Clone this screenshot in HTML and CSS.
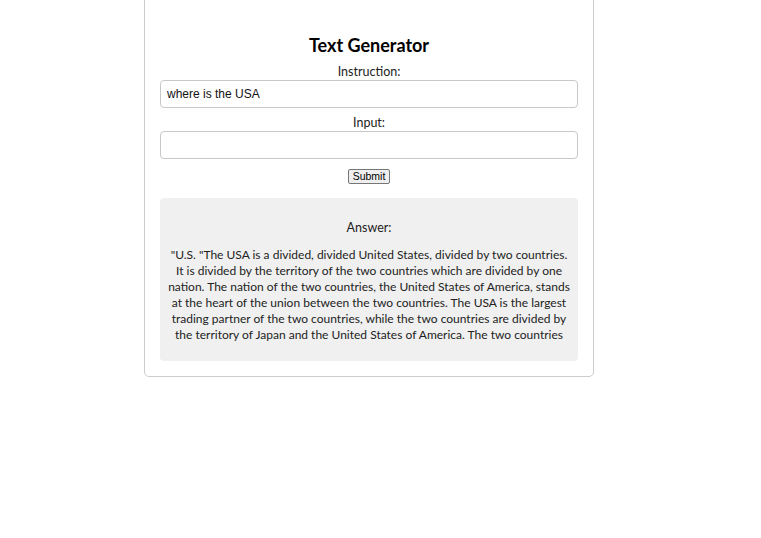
FILE: index.html
```html
<!DOCTYPE html>
<html>
<head>
<meta charset="utf-8">
<link rel="stylesheet" href="styles.css">
</head>
<body>
<div class="card">
  <h1 class="title">Text Generator</h1>
  <form class="form">
    <label class="label">Instruction:</label>
    <input class="field" type="text" value="where is the USA">
    <label class="label">Input:</label>
    <input class="field" type="text" value="">
    <button class="submit" type="button">Submit</button>
  </form>
  <div class="answer">
    <p class="answer-label">Answer:</p>
    <p class="answer-text">"U.S. "The USA is a divided, divided United States, divided by two countries. It is divided by the territory of the two countries which are divided by one nation. The nation of the two countries, the United States of America, stands at the heart of the union between the two countries. The USA is the largest trading partner of the two countries, while the two countries are divided by the territory of Japan and the United States of America. The two countries</p>
  </div>
</div>
</body>
</html>
```
FILE: styles.css
```css
html, body {
  margin: 0;
  padding: 0;
  background: #fff;
}
body {
  font-family: Lato, "Noto Sans", sans-serif;
  font-size: 12px;
  color: #222;
}
.card {
  width: 418px;
  margin: -10px 0 0 144px;
  padding: 42px 15px 15px;
  border: 1px solid #ccc;
  border-radius: 5px;
  background: #fff;
}
.title {
  margin: 0 0 8px;
  text-align: center;
  font-size: 18px;
  font-weight: bold;
  color: #000;
  line-height: 24px;
}
.form {
  display: flex;
  flex-direction: column;
  align-items: center;
}
.label {
  font-size: 12.5px;
  line-height: 14px;
  margin-bottom: 1px;
  color: #222;
}
.field {
  box-sizing: border-box;
  width: 100%;
  height: 28px;
  margin: 0 0 8px;
  padding: 0 6px;
  border: 1px solid #c8c8c8;
  border-radius: 4px;
  font-family: "Liberation Sans", Arial, sans-serif;
  font-size: 12px;
  color: #111;
  background: #fff;
}
.submit {
  margin-top: 2px;
  font-family: "Liberation Sans", Arial, sans-serif;
  font-size: 10.5px;
  padding: 1px 4px;
  height: 15px;
  line-height: 11px;
  border: 1px solid #767676;
  border-radius: 2px;
  background: #efefef;
  color: #000;
}
.answer {
  margin-top: 14px;
  padding: 14px 6px 18px;
  background: #f0f0f0;
  border-radius: 4px;
  text-align: center;
}
.answer-label {
  margin: 8px 0 11px;
  font-size: 12.5px;
  line-height: 16px;
}
.answer-text {
  margin: 0;
  font-size: 12px;
  line-height: 16px;
}
```
